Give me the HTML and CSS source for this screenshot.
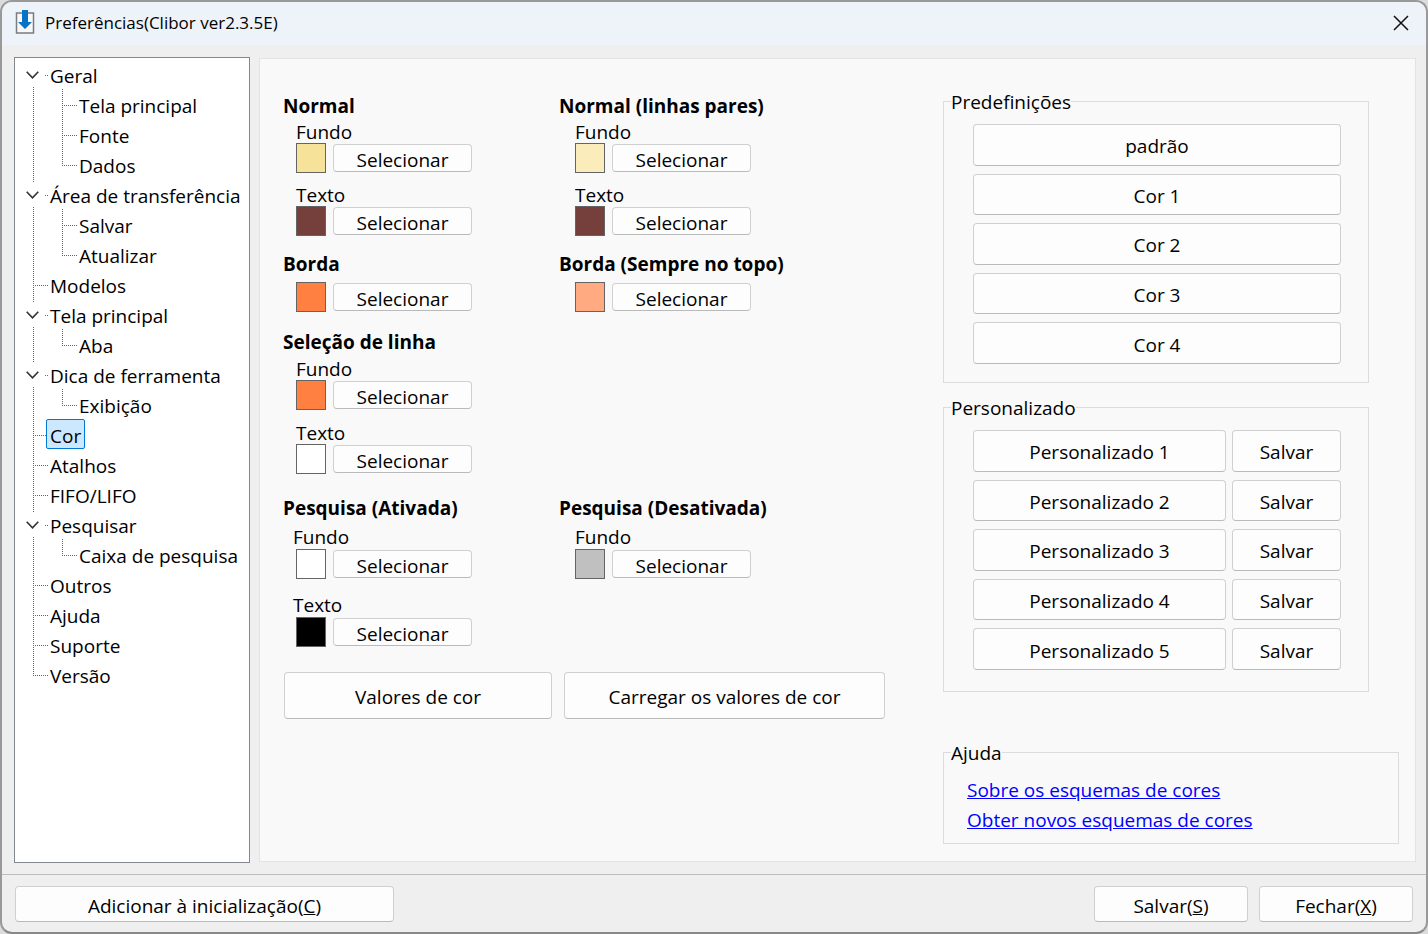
FILE: index.html
```html
<!DOCTYPE html>
<html lang="pt">
<head>
    <meta charset="utf-8">
    <title>Preferências(Clibor ver2.3.5E)</title>
    <link rel="stylesheet" href="styles.css">
</head>
<body>
    <div class="window">
        <header class="titlebar">
            <svg class="app-icon" width="20" height="26" viewBox="0 0 20 26">
                <rect x="1.5" y="3" width="17" height="20" fill="#f8f8f8" stroke="#7b7b80" stroke-width="1.5"/>
                <path d="M7 0h6v12h4l-7 7-7-7h4z" fill="#0873c4"/>
            </svg>
            <h1>Preferências(Clibor ver2.3.5E)</h1>
            <button class="close" aria-label="Fechar">
                <svg width="16" height="16" viewBox="0 0 16 16"><path d="M1 1l14 14M15 1L1 15" stroke="#111" stroke-width="1.5"/></svg>
            </button>
        </header>

        <div class="content">
            <nav class="tree">
                <ul>
                    <li class="parent">
                        <div class="node"><svg class="chevron" width="13" height="8" viewBox="0 0 13 8"><path d="M.7.8l5.8 6 5.8-6"/></svg><a href="#">Geral</a></div>
                        <ul>
                            <li><a href="#">Tela principal</a></li>
                            <li><a href="#">Fonte</a></li>
                            <li><a href="#">Dados</a></li>
                        </ul>
                    </li>
                    <li class="parent">
                        <div class="node"><svg class="chevron" width="13" height="8" viewBox="0 0 13 8"><path d="M.7.8l5.8 6 5.8-6"/></svg><a href="#">Área de transferência</a></div>
                        <ul>
                            <li><a href="#">Salvar</a></li>
                            <li><a href="#">Atualizar</a></li>
                        </ul>
                    </li>
                    <li><a href="#">Modelos</a></li>
                    <li class="parent">
                        <div class="node"><svg class="chevron" width="13" height="8" viewBox="0 0 13 8"><path d="M.7.8l5.8 6 5.8-6"/></svg><a href="#">Tela principal</a></div>
                        <ul>
                            <li><a href="#">Aba</a></li>
                        </ul>
                    </li>
                    <li class="parent">
                        <div class="node"><svg class="chevron" width="13" height="8" viewBox="0 0 13 8"><path d="M.7.8l5.8 6 5.8-6"/></svg><a href="#">Dica de ferramenta</a></div>
                        <ul>
                            <li><a href="#">Exibição</a></li>
                        </ul>
                    </li>
                    <li><a href="#" class="selected">Cor</a></li>
                    <li><a href="#">Atalhos</a></li>
                    <li><a href="#">FIFO/LIFO</a></li>
                    <li class="parent">
                        <div class="node"><svg class="chevron" width="13" height="8" viewBox="0 0 13 8"><path d="M.7.8l5.8 6 5.8-6"/></svg><a href="#">Pesquisar</a></div>
                        <ul>
                            <li><a href="#">Caixa de pesquisa</a></li>
                        </ul>
                    </li>
                    <li><a href="#">Outros</a></li>
                    <li><a href="#">Ajuda</a></li>
                    <li><a href="#">Suporte</a></li>
                    <li><a href="#">Versão</a></li>
                </ul>
            </nav>

            <main class="panel">
                <div class="colors">
                    <div class="color-grid">
                        <section class="normal">
                            <h2>Normal</h2>
                            <label for="normalBg">Fundo</label>
                            <div class="picker"><span class="swatch yellow"></span><button id="normalBg">Selecionar</button></div>
                            <label for="normalText">Texto</label>
                            <div class="picker"><span class="swatch brown"></span><button id="normalText">Selecionar</button></div>
                        </section>
                        <section class="normal second">
                            <h2>Normal (linhas pares)</h2>
                            <label for="evenBg">Fundo</label>
                            <div class="picker"><span class="swatch light-yellow"></span><button id="evenBg">Selecionar</button></div>
                            <label for="evenText">Texto</label>
                            <div class="picker"><span class="swatch brown"></span><button id="evenText">Selecionar</button></div>
                        </section>
                        <section class="edge">
                            <h2>Borda</h2>
                            <div class="picker"><span class="swatch orange"></span><button>Selecionar</button></div>
                        </section>
                        <section class="edge second">
                            <h2>Borda (Sempre no topo)</h2>
                            <div class="picker"><span class="swatch light-orange"></span><button>Selecionar</button></div>
                        </section>
                        <section class="line">
                            <h2>Seleção de linha</h2>
                            <label for="lineBg">Fundo</label>
                            <div class="picker"><span class="swatch orange"></span><button id="lineBg">Selecionar</button></div>
                            <label for="lineText">Texto</label>
                            <div class="picker"><span class="swatch white"></span><button id="lineText">Selecionar</button></div>
                        </section>
                        <section class="search">
                            <h2>Pesquisa (Ativada)</h2>
                            <label for="searchBg">Fundo</label>
                            <div class="picker"><span class="swatch white"></span><button id="searchBg">Selecionar</button></div>
                            <label for="searchText">Texto</label>
                            <div class="picker"><span class="swatch black"></span><button id="searchText">Selecionar</button></div>
                        </section>
                        <section class="search second">
                            <h2>Pesquisa (Desativada)</h2>
                            <label for="searchOff">Fundo</label>
                            <div class="picker"><span class="swatch gray"></span><button id="searchOff">Selecionar</button></div>
                        </section>
                    </div>
                    <div class="values">
                        <button class="show-values">Valores de cor</button>
                        <button class="load-values">Carregar os valores de cor</button>
                    </div>
                </div>

                <div class="side">
                    <fieldset class="presets">
                        <legend>Predefinições</legend>
                        <div class="rows">
                            <button>padrão</button>
                            <button>Cor 1</button>
                            <button>Cor 2</button>
                            <button>Cor 3</button>
                            <button>Cor 4</button>
                        </div>
                    </fieldset>
                    <fieldset class="custom">
                        <legend>Personalizado</legend>
                        <div class="rows pairs">
                            <button>Personalizado 1</button><button>Salvar</button>
                            <button>Personalizado 2</button><button>Salvar</button>
                            <button>Personalizado 3</button><button>Salvar</button>
                            <button>Personalizado 4</button><button>Salvar</button>
                            <button>Personalizado 5</button><button>Salvar</button>
                        </div>
                    </fieldset>
                    <fieldset class="help">
                        <legend>Ajuda</legend>
                        <a href="#">Sobre os esquemas de cores</a>
                        <a href="#">Obter novos esquemas de cores</a>
                    </fieldset>
                </div>
            </main>
        </div>

        <footer class="footer">
            <button class="startup">Adicionar à inicialização(<u>C</u>)</button>
            <button class="action">Salvar(<u>S</u>)</button>
            <button class="action">Fechar(<u>X</u>)</button>
        </footer>
    </div>
</body>
</html>
```
FILE: styles.css
```css
* {
    box-sizing: border-box;
}
body {
    margin: 0;
    background-color: #dcdcdc;
    color: #000;
    font-family: "Open Sans", "Noto Sans", sans-serif;
    font-size: 19px;
    line-height: 24px;
}
.window {
    display: flex;
    flex-direction: column;
    min-height: 100vh;
    border: 2px solid #999;
    border-bottom-color: #888;
    border-radius: 12px;
    background-color: #efefef;
    overflow: hidden;
}
button {
    padding: 3px 0 0;
    border: 1px solid #d0d0d0;
    border-bottom-color: #bababa;
    border-radius: 4px;
    background-color: #fdfdfd;
    color: #000;
    font: inherit;
}

/* title bar */
.titlebar {
    display: flex;
    align-items: center;
    height: 43px;
    padding: 0 17px 2px 13px;
    background-color: #eef3fa;
}
.titlebar h1 {
    flex: 1;
    margin: 0 0 0 10px;
    font-size: 17px;
    font-weight: normal;
}
.close {
    display: flex;
    padding: 0;
    border: none;
    background: none;
}

.content {
    display: flex;
    flex: 1;
    gap: 9px;
    padding: 12px 10px 11px 12px;
}

/* tree */
.tree {
    width: 236px;
    padding: 1px 0;
    border: 1px solid #828790;
    background-color: #fff;
}
.tree ul {
    margin: 0;
    padding: 0;
    list-style: none;
}
.tree li {
    --down: repeating-linear-gradient(#666 0 1px, transparent 1px 2px);
    --across: repeating-linear-gradient(90deg, #666 0 1px, transparent 1px 2px);
    padding-left: 31px;
    background-image: var(--down), var(--across);
    background-position: 18px 0, 18px 16px;
    background-size: 1px 100%, 15px 1px;
    background-repeat: no-repeat;
}
.tree li:last-child {
    background-size: 1px 16px, 15px 1px;
}
.tree .parent {
    padding-left: 0;
    background-image: var(--down), linear-gradient(#fff, #fff), var(--down), var(--across);
    background-position: 18px 0, 18px 0, 18px 0, 30px 16px;
    background-size: 1px 3px, 1px 28px, 1px 100%, 3px 1px;
}
.tree .parent:first-child {
    background-size: 0 0, 1px 28px, 1px 100%, 3px 1px;
}
.tree .parent li {
    padding-left: 60px;
    background-position: 47px 0, 47px 16px;
}
.node {
    display: flex;
    align-items: center;
    padding-left: 11px;
}
.chevron {
    margin: 2px 7px 0 0;
    fill: none;
    stroke: #333;
    stroke-width: 1.6;
}
.tree a {
    display: inline-block;
    height: 30px;
    padding: 4px 3px 0;
    border: 1px solid transparent;
    border-radius: 2px;
    color: #000;
    text-decoration: none;
    vertical-align: top;
    white-space: nowrap;
}
.tree .selected {
    border-color: #0078d7;
    background-color: #cce8ff;
}

/* main panel */
.panel {
    display: flex;
    flex: 1;
    margin: 1px 0;
    padding: 29px 16px 16px 23px;
    border: 1px solid #e3e3e3;
    background-color: #f9f9f9;
}
.colors {
    flex: 1;
    padding-top: 6px;
}
.color-grid {
    display: grid;
    grid-template-columns: 276px 1fr;
}
.color-grid section {
    grid-column: 1;
}
.color-grid .second {
    grid-column: 2;
}
.color-grid h2 {
    margin: 0;
    font-size: 19px;
    font-weight: bold;
    line-height: 24px;
}
.color-grid label {
    display: block;
    margin-left: 13px;
    line-height: 22px;
}
.picker {
    display: flex;
    align-items: center;
    gap: 7px;
    margin-left: 13px;
}
.picker button {
    width: 139px;
    height: 28px;
    line-height: 22px;
}
.normal h2 {
    margin-bottom: 3px;
}
.line h2 {
    margin-bottom: 4px;
}
.edge h2 {
    margin-bottom: 6px;
}
.search h2 {
    margin-bottom: 5px;
}
.normal {
    margin-bottom: 16px;
}
.edge {
    margin-bottom: 18px;
}
.line {
    margin-bottom: 22px;
}
.search {
    margin-bottom: 25px;
}
.normal .picker + label {
    margin-top: 11px;
}
.line .picker + label {
    margin-top: 12px;
}
.search .picker + label {
    margin-top: 14px;
}
.search label {
    margin-left: 10px;
    line-height: 24px;
}
.color-grid .second label,
.second .picker {
    margin-left: 16px;
}
.swatch {
    width: 30px;
    height: 30px;
    border: 1px solid #646464;
}
.yellow { background-color: #f7e29a; }
.light-yellow { background-color: #fbedbb; }
.brown { background-color: #753f3c; }
.orange { background-color: #ff8040; }
.light-orange { background-color: #ffaa80; }
.white { background-color: #fff; }
.black { background-color: #000; }
.gray { background-color: #c0c0c0; }

.values {
    display: flex;
    gap: 12px;
    margin-left: 1px;
}
.values button {
    height: 47px;
}
.show-values {
    width: 268px;
}
.load-values {
    width: 321px;
}

/* right column */
.side {
    width: 456px;
}
fieldset {
    margin: 0;
    padding: 10px 7px 8px;
    border: 1px solid #dcdcdc;
}
legend {
    padding: 2px 0 0;
}
.presets,
.custom {
    margin-right: 30px;
}
.presets {
    margin-bottom: 11px;
    padding-bottom: 18px;
}
.custom {
    margin-bottom: 47px;
    padding-bottom: 21px;
}
.rows {
    display: grid;
    grid-auto-rows: 1fr;
    gap: 8px 6px;
    height: 240px;
    margin: 0 20px 0 22px;
}
.pairs {
    grid-template-columns: 1fr 109px;
}
.help a {
    display: block;
    width: fit-content;
    margin-left: 16px;
    color: #00f;
    line-height: 30px;
}

/* footer */
.footer {
    display: flex;
    gap: 11px;
    padding: 11px 13px 10px;
    border-top: 1px solid #bdbdbd;
}
.footer button {
    height: 36px;
}
.startup {
    width: 379px;
    margin-right: auto;
}
.action {
    width: 154px;
}
```
